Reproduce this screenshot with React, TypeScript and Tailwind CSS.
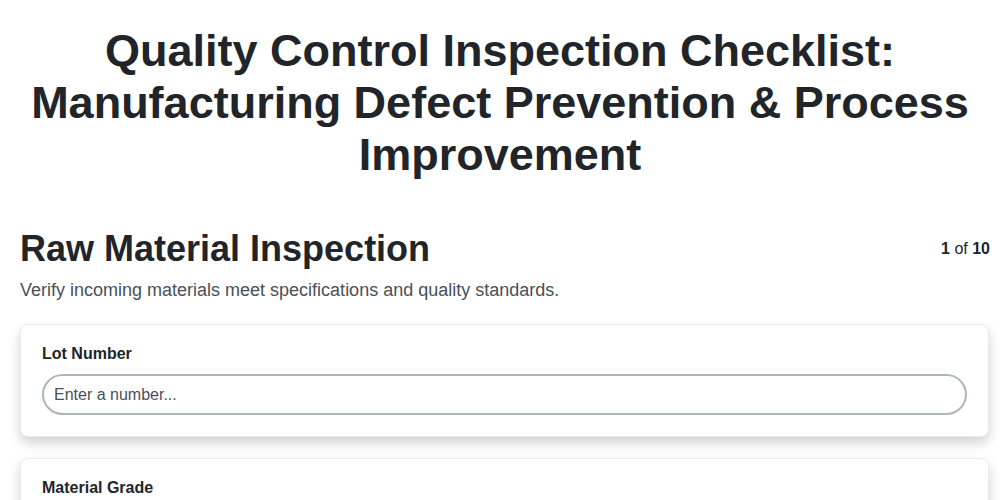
import React from 'react';

const fields = ['Lot Number', 'Material Grade'];

const App: React.FC = () => {
  return (
    <div className="min-h-screen bg-white text-[#212529]" style={{ fontFamily: '"Liberation Sans", Arial, sans-serif' }}>
      <h1 className="px-5 pt-[25px] text-center text-[45px] font-bold leading-[52px]">
        Quality Control Inspection Checklist: Manufacturing Defect Prevention &amp; Process Improvement
      </h1>
      <div className="pl-5 pr-[10px]">
        <div className="mt-[46px] flex items-start justify-between">
          <h2 className="text-[36px] font-bold leading-[44px]">Raw Material Inspection</h2>
          <div className="pt-[10px] text-base"><b>1</b> of <b>10</b></div>
        </div>
        <p className="mt-[5px] text-lg text-[#495057]">Verify incoming materials meet specifications and quality standards.</p>
        <div className="mt-[20px] flex flex-col gap-[21px]">
          {fields.map(f => (
            <div key={f} className="mr-[1px] rounded-lg border border-[#e9ecef] bg-white px-[21px] pt-[19px] pb-[21px] shadow-[0_6px_12px_rgba(0,0,0,0.18)]">
              <label className="block text-base font-bold leading-5">{f}</label>
              <input
                className="mt-[10px] block h-[41px] w-full rounded-full border-2 border-[#adb5bd] pl-[10px] pr-3 text-base text-[#212529] placeholder:text-[#495057] outline-none"
                placeholder="Enter a number..."
              />
            </div>
          ))}
        </div>
      </div>
    </div>
  );
};

export default App;
